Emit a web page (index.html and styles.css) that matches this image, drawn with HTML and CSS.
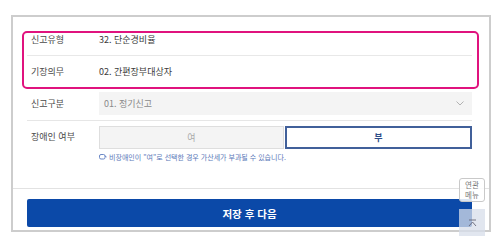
FILE: index.html
```html
<!DOCTYPE html>
<html lang="ko">
<head>
    <meta charset="utf-8">
    <meta name="viewport" content="width=device-width, initial-scale=1.0">
    <title>신고 정보</title>
    <link rel="stylesheet" href="styles.css">
</head>
<body>

    <div class="panel">
        <!-- 강조 영역 -->
        <div class="highlight">
            <div class="row row-first">
                <div class="label">신고유형</div>
                <div class="value">32. 단순경비율</div>
            </div>
            <div class="row row-last">
                <div class="label">기장의무</div>
                <div class="value">02. 간편장부대상자</div>
            </div>
        </div>

        <div class="field select-row">
            <div class="label">신고구분</div>
            <div class="select">
                <span>01. 정기신고</span>
                <svg class="chev" width="8" height="5" viewBox="0 0 8 5"><path d="M0.5 0.5 L4 4 L7.5 0.5" fill="none" stroke="#aaa" stroke-width="0.9"/></svg>
            </div>
        </div>

        <div class="field toggle-row">
            <div class="label">장애인 여부</div>
            <div class="toggle-box">
                <div class="toggles">
                    <button class="tg tg-off">여</button>
                    <button class="tg tg-on">부</button>
                </div>
                <div class="note">
                    <svg width="8" height="6" viewBox="0 0 8 6"><rect x="0.5" y="0.5" width="5.5" height="4.5" rx="1.5" fill="none" stroke="#5a7ac0" stroke-width="0.9"/><path d="M6 2 L7.6 3" stroke="#5a7ac0" stroke-width="0.9"/></svg>
                    비장애인이 "여"로 선택한 경우 가산세가 부과될 수 있습니다.
                </div>
            </div>
        </div>

        <div class="footer">
            <button class="save">저장 후 다음</button>
        </div>
    </div>

    <!-- 떠있는 버튼 -->
    <div class="float-menu">연관<br>메뉴</div>
    <div class="float-top">
        <svg width="9" height="8" viewBox="0 0 9 8"><path d="M1 1 H8" stroke="#667" stroke-width="0.9"/><path d="M1 7 L4.5 3 L8 7" fill="none" stroke="#667" stroke-width="0.9"/></svg>
    </div>

</body>
</html>
```

FILE: styles.css
```css
body {
    margin: 0;
    background: #fff;
    font-family: "Noto Sans CJK KR", "Noto Sans", sans-serif;
    color: #333;
}

/* 바깥 패널 */
.panel {
    margin: 15px 0 0 11px;
    width: 480px;
    height: 217px;
    border: 2px solid #cdcdcd;
    padding: 14px 10px 0 9px;
    box-sizing: border-box;
    display: flex;
    flex-direction: column;
}

/* 강조 박스 */
.highlight {
    border: 2px solid #e0137e;
    border-radius: 5px;
    padding: 0 5px 0 3px;
}

.row {
    display: flex;
    align-items: center;
    font-size: 9px;
    line-height: 14px;
}
.row-first {
    padding: 0 0 8px;
    border-bottom: 1px solid #e8e8e8;
}
.row-last {
    padding: 9px 0 8px;
}

.label {
    width: 72px;
    padding-left: 4px;
    box-sizing: border-box;
    color: #4a4a4a;
    font-size: 9px;
    flex: none;
}
.value {
    color: #3a3a3a;
    font-weight: normal;
}

.field {
    display: flex;
    margin: 0 7px 0 5px;
    font-size: 9px;
}

/* 신고구분 */
.select-row {
    align-items: center;
    padding: 3px 0 5px;
    border-bottom: 1px solid #e6e6e6;
}
.select {
    flex: 1;
    height: 23px;
    background: #f4f4f4;
    display: flex;
    align-items: center;
    justify-content: space-between;
    padding: 0 8px 0 5px;
    color: #8a8a8a;
}
.chev {
    display: block;
}

/* 장애인 여부 */
.toggle-row {
    padding-top: 5px;
    flex: 1;
}
.toggle-row .label {
    padding-top: 4px;
}
.toggle-box {
    flex: 1;
}
.toggles {
    display: flex;
    gap: 1px;
}
.tg {
    flex: 1;
    height: 23px;
    font-family: inherit;
    font-size: 9px;
    cursor: pointer;
}
.tg-off {
    background: #f4f4f4;
    border: 1px solid #dedede;
    color: #aaa;
}
.tg-on {
    background: #fff;
    border: 2px solid #41609a;
    color: #2d4c88;
    font-weight: bold;
}
.note {
    margin-top: 3px;
    font-size: 7px;
    color: #5a78b8;
    display: flex;
    align-items: center;
    gap: 2px;
}

/* 하단 */
.footer {
    margin: 0 -10px 0 -9px;
    border-top: 1px solid #e2e2e2;
    padding: 10px 17px 3px 14px;
}
.save {
    display: block;
    width: 100%;
    height: 28px;
    border: none;
    border-radius: 2px;
    background: #0b49a8;
    color: #fff;
    font-family: inherit;
    font-size: 10.5px;
    font-weight: bold;
    cursor: pointer;
}

/* 떠있는 버튼 */
.float-menu {
    position: absolute;
    left: 459px;
    top: 178px;
    width: 26px;
    height: 24px;
    box-sizing: border-box;
    border: 1px solid #c9c9c9;
    border-radius: 3px;
    background: rgba(255, 255, 255, 0.85);
    color: #777;
    font-size: 7.5px;
    line-height: 10px;
    text-align: center;
    padding-top: 1px;
}
.float-top {
    position: absolute;
    left: 459px;
    top: 209px;
    width: 26px;
    height: 27px;
    background: rgba(215, 222, 234, 0.75);
    display: flex;
    align-items: center;
    justify-content: center;
}
```
